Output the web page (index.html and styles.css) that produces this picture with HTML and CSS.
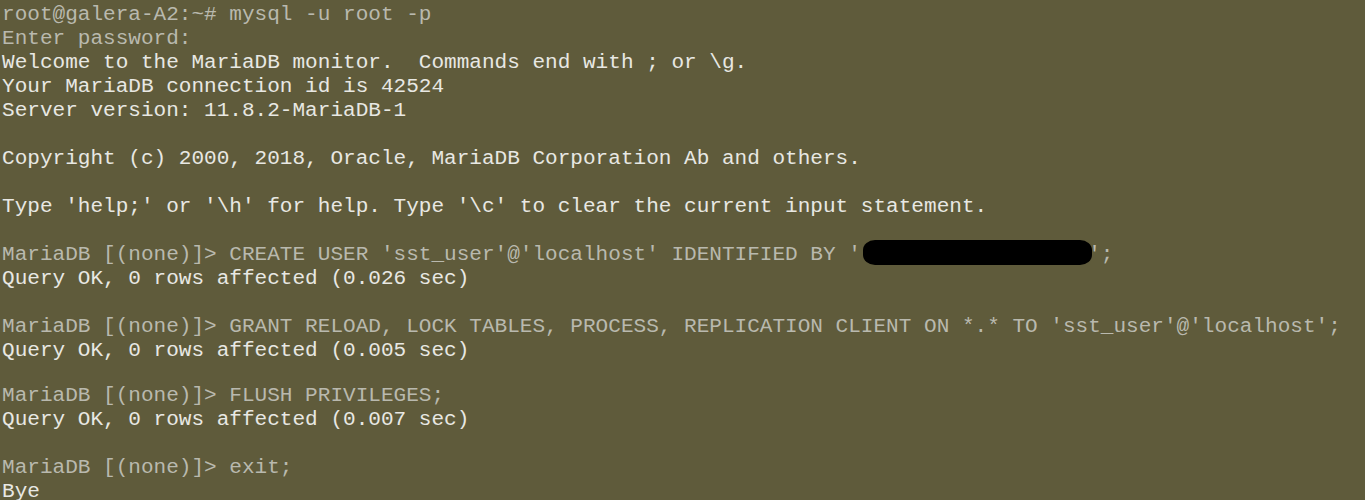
FILE: index.html
```html
<!DOCTYPE html>
<html>
<head>
<meta charset="utf-8">
<link rel="stylesheet" href="styles.css">
</head>
<body>
<div class="term">
<div class="line dim">root@galera-A2:~# mysql -u root -p</div>
<div class="line dim">Enter password:</div>
<div class="line">Welcome to the MariaDB monitor.  Commands end with ; or \g.</div>
<div class="line">Your MariaDB connection id is 42524</div>
<div class="line">Server version: 11.8.2-MariaDB-1</div>
<div class="line"> </div>
<div class="line">Copyright (c) 2000, 2018, Oracle, MariaDB Corporation Ab and others.</div>
<div class="line"> </div>
<div class="line">Type 'help;' or '\h' for help. Type '\c' to clear the current input statement.</div>
<div class="line"> </div>
<div class="line dim">MariaDB [(none)]&gt; CREATE USER 'sst_user'@'localhost' IDENTIFIED BY '<span class="redact">                  </span>';</div>
<div class="line">Query OK, 0 rows affected (0.026 sec)</div>
<div class="line"> </div>
<div class="line dim">MariaDB [(none)]&gt; GRANT RELOAD, LOCK TABLES, PROCESS, REPLICATION CLIENT ON *.* TO 'sst_user'@'localhost';</div>
<div class="line">Query OK, 0 rows affected (0.005 sec)</div>
<div class="line short"> </div>
<div class="line dim">MariaDB [(none)]&gt; FLUSH PRIVILEGES;</div>
<div class="line">Query OK, 0 rows affected (0.007 sec)</div>
<div class="line"> </div>
<div class="line dim">MariaDB [(none)]&gt; exit;</div>
<div class="line">Bye</div>
</div>
</body>
</html>
```
FILE: styles.css
```css
html, body {
  margin: 0;
  padding: 0;
  background: #5f5b3b;
  overflow: hidden;
}
.term {
  padding: 2px 0 0 2px;
  font-family: "Liberation Mono", "Courier New", monospace;
  font-size: 21.05px;
  line-height: 24px;
  color: #e8e8e3;
}
.line {
  height: 24px;
  white-space: pre;
}
.line.short {
  height: 21px;
}
.dim {
  color: #b9b9ae;
}
.redact {
  position: relative;
}
.redact::after {
  content: "";
  position: absolute;
  left: 2px;
  right: -4px;
  top: -2px;
  bottom: 1px;
  background: #000;
  border-radius: 12px / 10px;
}
```
